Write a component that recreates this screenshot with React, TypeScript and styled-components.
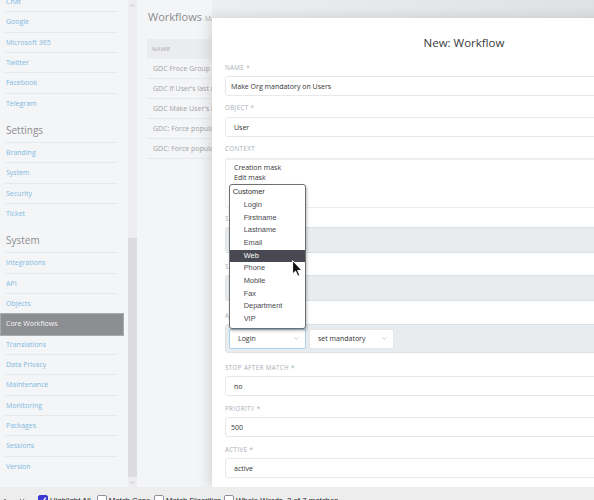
import React from 'react';
import styled, { createGlobalStyle } from 'styled-components';
import { ChevronDown, ChevronUp } from 'lucide-react';

const GlobalStyle = createGlobalStyle`
  html, body {
    margin: 0;
    padding: 0;
    background: #f4f5f7;
  }
  body {
    font-family: "Open Sans", "Noto Sans", sans-serif;
    overflow: hidden;
  }
  * {
    box-sizing: border-box;
  }
`;

const Page = styled.div`
  width: 594px;
  height: 500px;
  display: flex;
  flex-direction: column;
  overflow: hidden;
`;

const Workspace = styled.div`
  position: relative;
  height: 487px;
  flex-shrink: 0;
  display: flex;
  overflow: hidden;
`;

/* ---------- sidebar ---------- */

const Sidebar = styled.nav`
  width: 128px;
  flex-shrink: 0;
  background: #f4f5f7;
  overflow: hidden;
`;

const NavList = styled.div`
  margin-top: -8.1px;
`;

const NavHeader = styled.div`
  height: 29px;
  margin: 0 11px 0 5px;
  padding: 9px 0 0 1px;
  font-size: 10px;
  line-height: 14px;
  color: #8d8d90;
  border-bottom: 1px solid #e7e8ea;
`;

const NavItem = styled.div<{ $last?: boolean; $active?: boolean }>`
  height: 20.35px;
  margin: ${(p) => (p.$active ? '0 5px 0 1px' : '0 11px 0 5px')};
  padding-left: ${(p) => (p.$active ? '5px' : '1px')};
  font-size: 7px;
  line-height: 19.35px;
  white-space: nowrap;
  color: ${(p) => (p.$active ? '#f4f4f5' : '#7fb9e2')};
  background: ${(p) => (p.$active ? '#8d8e92' : 'transparent')};
  border-bottom: 1px solid ${(p) => (p.$last || p.$active ? 'transparent' : '#e7e8ea')};
  outline: ${(p) => (p.$active ? '1px solid #a9aaad' : 'none')};
`;

const Scrollbar = styled.div`
  width: 9px;
  flex-shrink: 0;
  background: #ededef;
  display: flex;
  flex-direction: column;
`;

const ScrollArrow = styled.div`
  height: 10px;
  display: flex;
  align-items: center;
  justify-content: center;
  color: #a3a3a6;
`;

const ScrollThumb = styled.div`
  flex: 1;
  margin-top: 228px;
  background: #dcdcde;
`;

/* ---------- background page ---------- */

const Content = styled.main`
  flex: 1;
  min-width: 0;
  background: #f4f5f7;
  padding: 9px 0 0 11px;
`;

const PageTitle = styled.h1`
  margin: 0;
  font-size: 11px;
  font-weight: 400;
  line-height: 16px;
  color: #8b8b8e;
  white-space: nowrap;

  small {
    margin-left: 3px;
    font-size: 6.5px;
    color: #b0b0b3;
  }
`;

const Table = styled.div`
  width: 300px;
  margin: 11.7px 0 0 -1px;
`;

const TableHead = styled.div`
  height: 20px;
  padding-left: 5px;
  background: #ebecee;
  font-size: 5.8px;
  line-height: 20px;
  letter-spacing: 0.5px;
  color: #a9a9ac;
`;

const TableRow = styled.div`
  height: 20px;
  padding-left: 6px;
  font-size: 7px;
  line-height: 19px;
  color: #a3a3a6;
  white-space: nowrap;
  border-bottom: 1px solid #e8e9eb;
`;

/* ---------- modal ---------- */

const Backdrop = styled.div`
  position: absolute;
  left: 212px;
  top: 0;
  right: 0;
  bottom: 0;
  background: linear-gradient(to right, #eceef0, #dfe1e3);
`;

const Dialog = styled.div`
  width: 504px;
  height: 469px;
  margin-top: 18px;
  padding: 18px 13px 0 13px;
  background: #fff;
  box-shadow: -3px 0 12px rgba(0, 0, 0, 0.13);
`;

const DialogTitle = styled.h2`
  margin: 0 0 13.7px;
  font-size: 11.5px;
  font-weight: 400;
  line-height: 14px;
  text-align: center;
  color: #39393c;
`;

const FormGroup = styled.div<{ $gap?: number }>`
  margin-bottom: ${(p) => p.$gap ?? 8}px;
`;

const Label = styled.div`
  height: 8px;
  font-size: 6.2px;
  line-height: 8px;
  letter-spacing: 0.4px;
  text-transform: uppercase;
  color: #a5adb6;
  margin-bottom: 4.3px;
  white-space: nowrap;
`;

const Field = styled.div<{ $pad?: number; $h?: number }>`
  height: ${(p) => p.$h ?? 20.5}px;
  padding-left: ${(p) => p.$pad ?? 5}px;
  display: flex;
  align-items: center;
  background: #fff;
  border: 1px solid #e6e8ea;
  border-radius: 3px;
  font-size: 7px;
  color: #333336;
`;

const ContextBox = styled.div`
  height: 50px;
  padding: 3px 8px;
  border: 1px solid #eceeef;
  border-top-width: 2px;
  border-radius: 3px;
  font-size: 7px;
  line-height: 10.3px;
  color: #333336;
`;

const Band = styled.div<{ $h: number }>`
  height: ${(p) => p.$h}px;
  padding: 4px 3px;
  display: flex;
  align-items: flex-start;
  gap: 3.3px;
  background: #e8ecef;
  border: 1px solid #dce2e6;
  border-radius: 3px;
`;

const ActionSelect = styled.div<{ $w: number; $focus?: boolean }>`
  width: ${(p) => p.$w}px;
  height: 20px;
  padding: 0 5px 0 8px;
  display: flex;
  align-items: center;
  justify-content: space-between;
  background: #fff;
  border: 1px solid ${(p) => (p.$focus ? '#a7d1f1' : '#e4e7ea')};
  border-radius: 2px;
  font-size: 7px;
  color: #333336;
  white-space: nowrap;
  svg {
    color: #8a8a8d;
  }
`;

/* ---------- native select popup ---------- */

const Popup = styled.div`
  position: absolute;
  left: 229px;
  top: 184px;
  width: 77px;
  height: 144.5px;
  padding-top: 1.4px;
  background: #fff;
  border: 1px solid #6f6f72;
  border-radius: 3px;
  box-shadow: 1px 2px 3px rgba(0, 0, 0, 0.25);
  font-family: "Liberation Sans", Arial, sans-serif;
  font-size: 7.4px;
  overflow: hidden;
`;

const PopupOption = styled.div<{ $group?: boolean; $hover?: boolean }>`
  height: 12.65px;
  line-height: 12.65px;
  padding-left: ${(p) => (p.$group ? 2.7 : 13.7)}px;
  color: ${(p) => (p.$hover ? '#ffffff' : p.$group ? '#2f2f32' : '#4a4a50')};
  background: ${(p) => (p.$hover ? '#494953' : 'transparent')};
`;

const Pointer = styled.svg`
  position: absolute;
  left: 292px;
  top: 260px;
`;

/* ---------- find bar ---------- */

const FindBar = styled.div`
  height: 13px;
  flex-shrink: 0;
  padding: 8px 0 0 0;
  display: flex;
  align-items: flex-start;
  background: #ededee;
  font-family: "Liberation Sans", Arial, sans-serif;
  font-size: 7.8px;
  color: #1c1b22;
  overflow: hidden;
`;

const FindNav = styled.div`
  width: 38px;
  display: flex;
  gap: 9px;
  padding-left: 1px;
  margin-top: 1px;
`;

const FindOption = styled.div<{ $w: number }>`
  width: ${(p) => p.$w}px;
  display: flex;
  align-items: flex-start;
  gap: 2px;
  white-space: nowrap;
  line-height: 12px;
`;

const Check = styled.span<{ $on?: boolean }>`
  width: 10px;
  height: 10px;
  flex-shrink: 0;
  display: flex;
  align-items: center;
  justify-content: center;
  border-radius: 2px;
  border: 1px solid ${(p) => (p.$on ? '#3a3ad0' : '#8f8f9d')};
  background: ${(p) => (p.$on ? '#3a3ad0' : '#fff')};
`;

const navGroups = [
  { title: '', items: ['Chat', 'Google', 'Microsoft 365', 'Twitter', 'Facebook', 'Telegram'] },
  { title: 'Settings', items: ['Branding', 'System', 'Security', 'Ticket'] },
  {
    title: 'System',
    items: [
      'Integrations',
      'API',
      'Objects',
      'Core Workflows',
      'Translations',
      'Data Privacy',
      'Maintenance',
      'Monitoring',
      'Packages',
      'Sessions',
      'Version',
    ],
  },
];

const workflows = [
  'GDC Froce Group to Organization',
  "GDC If User's last name is set",
  "GDC Make User's last name mandatory",
  'GDC: Force populate Organization',
  'GDC: Force populate Group',
];

const attributes = ['Login', 'Firstname', 'Lastname', 'Email', 'Web', 'Phone', 'Mobile', 'Fax', 'Department', 'VIP'];

const findOptions = [
  { label: 'Highlight All', w: 58.7, on: true },
  { label: 'Match Case', w: 57.3 },
  { label: 'Match Diacritics', w: 70 },
  { label: 'Whole Words', w: 63 },
];

export default function App() {
  return (
    <>
      <GlobalStyle />
      <Page>
        <Workspace>
          <Sidebar>
            <NavList>
              {navGroups.map((group) => (
                <React.Fragment key={group.title || 'top'}>
                  {group.title && <NavHeader>{group.title}</NavHeader>}
                  {group.items.map((item, i) => (
                    <NavItem
                      key={item}
                      $active={item === 'Core Workflows'}
                      $last={i === group.items.length - 1}
                    >
                      {item}
                    </NavItem>
                  ))}
                </React.Fragment>
              ))}
            </NavList>
          </Sidebar>

          <Scrollbar>
            <ScrollArrow>
              <ChevronUp size={7} strokeWidth={2} />
            </ScrollArrow>
            <ScrollThumb />
            <ScrollArrow>
              <ChevronDown size={7} strokeWidth={2} />
            </ScrollArrow>
          </Scrollbar>

          <Content>
            <PageTitle>
              Workflows<small>Management</small>
            </PageTitle>
            <Table>
              <TableHead>NAME</TableHead>
              {workflows.map((w) => (
                <TableRow key={w}>{w}</TableRow>
              ))}
            </Table>
          </Content>

          <Backdrop>
            <Dialog>
              <DialogTitle>New: Workflow</DialogTitle>

              <FormGroup>
                <Label>Name *</Label>
                <Field>Make Org mandatory on Users</Field>
              </FormGroup>

              <FormGroup>
                <Label>Object *</Label>
                <Field $pad={8}>User</Field>
              </FormGroup>

              <FormGroup $gap={7}>
                <Label>Context</Label>
                <ContextBox>
                  <div>Creation mask</div>
                  <div>Edit mask</div>
                </ContextBox>
              </FormGroup>

              <FormGroup $gap={10}>
                <Label>Selector</Label>
                <Band $h={26} />
              </FormGroup>

              <FormGroup $gap={10.5}>
                <Label>Saved selector</Label>
                <Band $h={26} />
              </FormGroup>

              <FormGroup $gap={10.5}>
                <Label>Action</Label>
                <Band $h={29.3}>
                  <ActionSelect $w={76.7} $focus>
                    Login
                    <ChevronDown size={7} strokeWidth={1.5} />
                  </ActionSelect>
                  <ActionSelect $w={85}>
                    set mandatory
                    <ChevronDown size={7} strokeWidth={1.5} />
                  </ActionSelect>
                </Band>
              </FormGroup>

              <FormGroup $gap={8.5}>
                <Label>Stop after match *</Label>
                <Field $pad={8} $h={20}>no</Field>
              </FormGroup>

              <FormGroup $gap={8.5}>
                <Label>Priority *</Label>
                <Field $h={20.3}>500</Field>
              </FormGroup>

              <FormGroup>
                <Label>Active *</Label>
                <Field $pad={8} $h={20.2}>active</Field>
              </FormGroup>
            </Dialog>
          </Backdrop>

          <Popup>
            <PopupOption $group>Customer</PopupOption>
            {attributes.map((a) => (
              <PopupOption key={a} $hover={a === 'Web'}>
                {a}
              </PopupOption>
            ))}
          </Popup>

          <Pointer width="11" height="17" viewBox="0 0 11 17">
            <path
              d="M0.6 0.6 V14 L3.6 11.1 L5.8 16.2 L7.8 15.3 L5.7 10.4 H9.9 Z"
              fill="#111"
              stroke="#fff"
              strokeWidth="1"
              strokeLinejoin="round"
            />
          </Pointer>
        </Workspace>

        <FindBar>
          <FindNav>
            <ChevronUp size={8} strokeWidth={1.6} />
            <ChevronDown size={8} strokeWidth={1.6} />
          </FindNav>
          {findOptions.map((o) => (
            <FindOption key={o.label} $w={o.w}>
              <Check $on={o.on}>
                {o.on && (
                  <svg width="8" height="8" viewBox="0 0 8 8">
                    <path d="M1.2 4.2 L3.2 6.2 L6.8 1.6" fill="none" stroke="#fff" strokeWidth="1.4" />
                  </svg>
                )}
              </Check>
              {o.label}
            </FindOption>
          ))}
          <FindOption $w={60}>2 of 7 matches</FindOption>
        </FindBar>
      </Page>
    </>
  );
}
